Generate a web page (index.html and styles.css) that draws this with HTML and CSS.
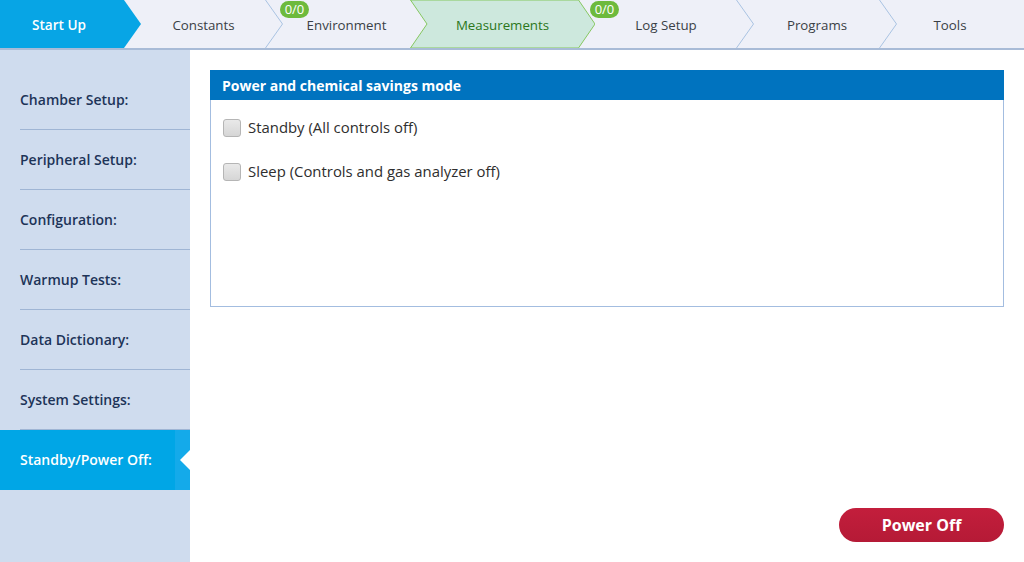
FILE: index.html
```html
<!DOCTYPE html>
<html>
<head>
<meta charset="utf-8">
<link rel="stylesheet" href="styles.css">
</head>
<body>
<div class="app">
  <nav class="tabs">
    <div class="tab tab-start">
      <svg class="shape" width="141" height="48" viewBox="0 0 141 48"><polygon points="0,0 124,0 141,24 124,48 0,48" fill="#07a5e5"/></svg>
      <span class="label">Start Up</span>
    </div>
    <div class="tab tab-constants">
      <svg class="sep" width="18" height="48" viewBox="0 0 18 48"><polyline points="0.5,0 17.5,24 0.5,48" fill="none" stroke="#a9c3e2" stroke-width="1"/></svg>
      <span class="label">Constants</span>
    </div>
    <div class="tab tab-env">
      <span class="badge">0/0</span>
      <span class="label">Environment</span>
    </div>
    <div class="tab tab-meas">
      <svg class="shape" width="185" height="48" viewBox="0 0 185 48"><polygon points="0.5,0 168.5,0 185,24 168.5,48 0.5,48 17,24" fill="#cde8dd" stroke="#86c760" stroke-width="1"/></svg>
      <span class="label">Measurements</span>
    </div>
    <div class="tab tab-log">
      <span class="badge">0/0</span>
      <svg class="sep" width="18" height="48" viewBox="0 0 18 48"><polyline points="0.5,0 17.5,24 0.5,48" fill="none" stroke="#a9c3e2" stroke-width="1"/></svg>
      <span class="label">Log Setup</span>
    </div>
    <div class="tab tab-prog">
      <svg class="sep" width="18" height="48" viewBox="0 0 18 48"><polyline points="0.5,0 17.5,24 0.5,48" fill="none" stroke="#a9c3e2" stroke-width="1"/></svg>
      <span class="label">Programs</span>
    </div>
    <div class="tab tab-tools">
      <span class="label">Tools</span>
    </div>
  </nav>
  <div class="body">
    <aside class="sidebar">
      <div class="side-item">Chamber Setup:</div>
      <div class="side-item">Peripheral Setup:</div>
      <div class="side-item">Configuration:</div>
      <div class="side-item">Warmup Tests:</div>
      <div class="side-item">Data Dictionary:</div>
      <div class="side-item">System Settings:</div>
      <div class="side-item active">Standby/Power Off:<span class="pointer"></span></div>
    </aside>
    <main class="main">
      <section class="panel">
        <header class="panel-head">Power and chemical savings mode</header>
        <div class="panel-body">
          <label class="row"><span class="check"></span>Standby (All controls off)</label>
          <label class="row"><span class="check"></span>Sleep (Controls and gas analyzer off)</label>
        </div>
      </section>
      <div class="actions">
        <button class="power">Power Off</button>
      </div>
    </main>
  </div>
</div>
</body>
</html>
```
FILE: styles.css
```css
* { box-sizing: border-box; }
html, body { margin: 0; padding: 0; }
body {
  width: 1024px;
  height: 562px;
  overflow: hidden;
  font-family: "Open Sans", "Noto Sans", sans-serif;
  background: #ffffff;
}
.app { display: flex; flex-direction: column; height: 562px; }

.tabs {
  display: flex;
  height: 50px;
  background: #eef0f8;
  border-bottom: 2px solid #a8bbd7;
  flex: none;
}
.tab {
  position: relative;
  height: 48px;
  display: flex;
  align-items: center;
  justify-content: center;
  font-size: 13.3px;
  font-weight: 500;
  color: #3a3f46;
  flex: none;
  padding-top: 1px;
}
.label { position: relative; z-index: 3; }
.shape { position: absolute; left: 0; top: 0; z-index: 1; }
.sep { position: absolute; right: -17px; top: 0; z-index: 2; }

.tab-start { width: 124px; color: #ffffff; font-weight: 600; font-size: 13.6px; padding-left: 0; }
.tab-start .label { margin-left: -6px; }
.tab-constants { width: 142px; padding-left: 17px; }
.tab-env { width: 144px; padding-left: 17px; }
.tab-meas { width: 168px; padding-left: 17px; color: #2b761b; }
.tab-log { width: 159px; padding-left: 17px; }
.tab-prog { width: 143px; padding-left: 17px; }
.tab-tools { width: 144px; padding-left: 0; }
.tab-tools .label { margin-left: -4px; }

.badge {
  position: absolute;
  left: 14px;
  top: 1px;
  width: 29px;
  height: 17px;
  border-radius: 9px;
  background: #6dba3c;
  color: #ffffff;
  font-size: 13px;
  font-weight: 500;
  line-height: 17px;
  text-align: center;
  z-index: 4;
}
.tab-log .badge { left: 12px; }

.body { display: flex; flex: 1; min-height: 0; }
.sidebar {
  width: 190px;
  flex: none;
  background: #cfdcee;
  padding-top: 20px;
  display: flex;
  flex-direction: column;
}
.side-item {
  position: relative;
  height: 60px;
  display: flex;
  align-items: center;
  padding-left: 20px;
  padding-bottom: 2px;
  font-size: 14px;
  font-weight: 600;
  color: #1d3458;
}
.side-item::after {
  content: "";
  position: absolute;
  left: 20px;
  right: 0;
  bottom: 0;
  height: 1px;
  background: #9fb5d4;
}
.side-item.active {
  background: linear-gradient(to right, #00a6e6 0, #00a6e6 175px, #14aaea 175px);
  color: #ffffff;
}
.side-item.active::after { display: none; }
.pointer {
  position: absolute;
  right: 0;
  top: 20px;
  width: 0;
  height: 0;
  border-top: 10px solid transparent;
  border-bottom: 10px solid transparent;
  border-right: 10px solid #ffffff;
}

.main {
  flex: 1;
  display: flex;
  flex-direction: column;
  padding: 20px;
}
.panel {
  height: 237px;
  border: 1px solid #a3bde0;
  border-top: none;
  display: flex;
  flex-direction: column;
}
.panel-head {
  height: 30px;
  background: #0073bf;
  color: #ffffff;
  font-size: 14px;
  font-weight: 700;
  display: flex;
  align-items: center;
  padding-left: 12px;
  margin: 0 -1px;
}
.panel-body { padding: 16px 12px 0; display: flex; flex-direction: column; gap: 22px; }
.row {
  display: flex;
  align-items: center;
  height: 22px;
  font-size: 14.9px;
  font-weight: 500;
  color: #2e2e2e;
}
.check {
  width: 18px;
  height: 18px;
  border: 1px solid #b5b5b5;
  border-radius: 3px;
  background: linear-gradient(#e9e9e9, #d6d6d6);
  margin-right: 7px;
  margin-top: 1px;
  flex: none;
}
.actions { margin-top: auto; display: flex; justify-content: flex-end; }
.power {
  width: 165px;
  height: 34px;
  border: none;
  border-radius: 17px;
  background: linear-gradient(#c31e3c, #b51a36);
  color: #ffffff;
  font-family: "Open Sans", "Noto Sans", sans-serif;
  font-size: 16px;
  font-weight: 700;
  padding: 0;
}
```
